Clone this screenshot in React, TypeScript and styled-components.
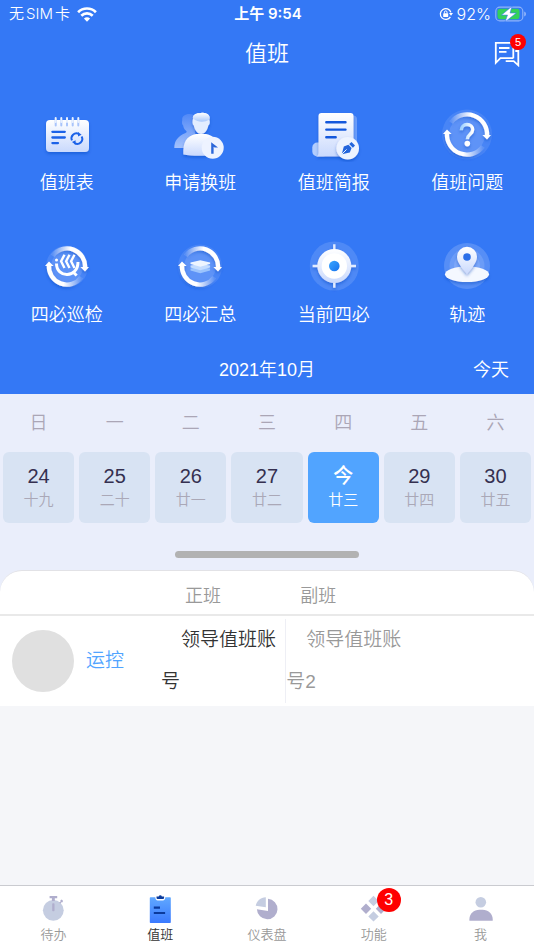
import React from "react";
import styled, { createGlobalStyle } from "styled-components";

const GlobalStyle = createGlobalStyle`
  *, *::before, *::after { box-sizing: border-box; }
  body {
    margin: 0;
    background: #f5f6f9;
    font-family: "Liberation Sans", "Noto Sans CJK SC", sans-serif;
    font-weight: 350;
  }
  button {
    border: 0;
    padding: 0;
    background: none;
    color: inherit;
    font: inherit;
    cursor: pointer;
  }
  h1, h2 { margin: 0; font-weight: inherit; }
  svg { display: block; flex: none; }
`;

const Screen = styled.div`
  display: flex;
  flex-direction: column;
  min-height: 100vh;
`;

const Hero = styled.header`
  background: #3478f5;
  color: #fff;
`;

const StatusBar = styled.div`
  display: grid;
  grid-template-columns: 1fr auto 1fr;
  align-items: center;
  height: 28px;
  padding: 0 7px 0 9px;
  font-family: Inter, "Noto Sans CJK SC", sans-serif;
  font-size: 15px;
  line-height: 20px;
`;

const StatusGroup = styled.div<{ $end?: boolean }>`
  display: flex;
  align-items: center;
  justify-content: ${(p) => (p.$end ? "flex-end" : "flex-start")};
  gap: ${(p) => (p.$end ? 4 : 7)}px;
`;

const Carrier = styled.span`
  display: flex;
  gap: 2px;
`;

const Percent = styled.span`
  font-size: 16px;
`;

const Clock = styled.time`
  font-weight: 600;
`;

const TitleBar = styled.div`
  display: grid;
  grid-template-columns: 1fr auto 1fr;
  align-items: center;
  height: 52px;
  padding: 0 14px;
`;

const Title = styled.h1`
  grid-column: 2;
  font-size: 22px;
  line-height: 32px;
`;

const MessageButton = styled.button`
  position: relative;
  justify-self: end;
`;

const Badge = styled.span<{ $size: number; $top: number; $right: number }>`
  position: absolute;
  top: ${(p) => p.$top}px;
  right: ${(p) => p.$right}px;
  width: ${(p) => p.$size}px;
  height: ${(p) => p.$size}px;
  border-radius: 50%;
  background: #fe0000;
  color: #fff;
  font-size: ${(p) => (p.$size > 20 ? 16 : 11)}px;
  line-height: ${(p) => p.$size}px;
  text-align: center;
`;

const ActionGrid = styled.nav`
  display: grid;
  grid-template-columns: repeat(4, 1fr);
  row-gap: 42px;
  padding: 26px 0 18px;
`;

const Action = styled.button`
  display: flex;
  flex-direction: column;
  align-items: center;
  gap: 8px;
  font-size: 18px;
  line-height: 26px;
`;

const MonthBar = styled.div`
  display: grid;
  grid-template-columns: 1fr auto 1fr;
  align-items: center;
  height: 48px;
  padding: 0 25px;
  font-size: 18px;
  line-height: 26px;
`;

const Month = styled.h2`
  grid-column: 2;
  font-size: 18px;
`;

const TodayButton = styled.button`
  justify-self: end;
`;

const Calendar = styled.section`
  background: #eaeefb;
`;

const Week = styled.div`
  display: grid;
  grid-template-columns: repeat(7, 1fr);
  gap: 5px;
  padding: 0 3px;
`;

const Weekday = styled.span`
  color: #aba6b6;
  font-size: 18px;
  line-height: 58px;
  text-align: center;
`;

const Day = styled.button<{ $today?: boolean }>`
  display: flex;
  flex-direction: column;
  align-items: center;
  justify-content: center;
  height: 71px;
  border-radius: 6px;
  background: ${(p) => (p.$today ? "#51a4ff" : "#d8e3f3")};
  color: ${(p) => (p.$today ? "#fff" : "#353050")};
`;

const DayNumber = styled.span<{ $today?: boolean }>`
  font-size: 20px;
  font-weight: ${(p) => (p.$today ? 500 : 350)};
  line-height: 24px;
`;

const Lunar = styled.span<{ $today?: boolean }>`
  color: ${(p) => (p.$today ? "#fff" : "#aaa8b7")};
  font-size: 15px;
  line-height: 24px;
`;

const HandleArea = styled.div`
  display: flex;
  justify-content: center;
  padding: 28px 0 12px;
`;

const Handle = styled.span`
  width: 184px;
  height: 7px;
  border-radius: 4px;
  background: #b2b2b2;
`;

const RosterBacking = styled.section`
  background: #eaeefb;
`;

const RosterCard = styled.div`
  overflow: hidden;
  border-top: 1px solid #e2e2e6;
  border-radius: 22px 22px 0 0;
  background: #fff;
`;

const Roster = styled.table`
  width: 100%;
  table-layout: fixed;
  border-collapse: collapse;
`;

const TeamCol = styled.col`
  width: 161px;
`;

const HeadCell = styled.th<{ $indent?: number }>`
  height: 44px;
  padding: 6px 0 0 ${(p) => p.$indent ?? 0}px;
  border-bottom: 2px solid #e9e9e9;
  color: #999;
  font-size: 18px;
  font-weight: inherit;
  line-height: 26px;
  text-align: left;
`;

const TeamCell = styled.th`
  padding: 0 0 0 12px;
  font-weight: inherit;
`;

const Team = styled.div`
  display: flex;
  align-items: center;
  gap: 12px;
  color: #51a4ff;
  font-size: 19px;
  line-height: 26px;
`;

const Avatar = styled.span`
  width: 62px;
  height: 62px;
  border-radius: 50%;
  background: #e0e0e0;
`;

const PersonCell = styled.td`
  padding: 3px 0;
`;

const Person = styled.div<{ $deputy?: boolean }>`
  border-left: ${(p) => (p.$deputy ? "1px solid #eeeff5" : "0")};
  color: ${(p) => (p.$deputy ? "#999" : "#333")};
  font-size: 19px;
  line-height: 42px;
  text-indent: 20px;
`;

const Spacer = styled.main`
  flex: 1;
`;

const TabBar = styled.nav`
  display: grid;
  grid-template-columns: repeat(5, 1fr);
  height: 65px;
  border-top: 1px solid #cacbd0;
  background: #fff;
`;

const Tab = styled.button<{ $active?: boolean }>`
  display: flex;
  flex-direction: column;
  align-items: center;
  gap: 2px;
  padding-top: 9px;
  color: ${(p) => (p.$active ? "#333" : "#999")};
  font-size: 13px;
  line-height: 20px;
`;

const TabIcon = styled.span`
  position: relative;
`;

const WifiIcon = () => (
  <svg width="20" height="15" viewBox="0 0 20 15" fill="none" stroke="#fff" strokeWidth="2.7">
    <path d="M1.1 5.2a12.600 12.600 0 0 1 17.800 0M4.300 8.700a8.100 8.100 0 0 1 11.400 0" />
    <path d="M10 14.800 6.900 11.600a4.500 4.500 0 0 1 6.200 0Z" fill="#fff" stroke="none" />
  </svg>
);

const LockIcon = () => (
  <svg width="14" height="14" viewBox="0 0 14 14" fill="none" stroke="#fff" strokeWidth="1.300">
    <path d="M11.400 9.800A5.400 5.400 0 1 1 11.900 5.400" />
    <path d="M10 6h4l-2 2.700Z" fill="#fff" stroke="none" />
    <rect x="4.200" y="6.200" width="5" height="3.800" rx=".6" fill="#fff" stroke="none" />
    <path d="M5.400 6.500V5.200a1.300 1.300 0 0 1 2.600 0v1.300" strokeWidth="1" />
  </svg>
);

const BatteryIcon = () => (
  <svg width="32" height="16" viewBox="0 0 32 16">
    <rect x=".8" y="1.100" width="27" height="13.800" rx="4" fill="none" stroke="#90b4fa" strokeWidth="1.100" />
    <path d="M29.200 5.500c2.400.8 2.400 4.200 0 5Z" fill="#90b4fa" />
    <rect x="2.500" y="2.800" width="22" height="10.400" rx="2.400" fill="#33d158" />
    <path d="M17 .2 6.500 9.100h6L10 15.900 21.300 7h-6.200Z" fill="#fff" stroke="#3478f5" strokeWidth=".6" />
  </svg>
);

const MessageIcon = () => (
  <svg width="26" height="26" viewBox="0 0 26 26" fill="none" stroke="#fff" strokeWidth="1.8">
    <path d="M19.3 17.2V1.8H1.800v20l4.600-4.600h12.900" />
    <path d="M5 7h10.500M5 10.800h7.500M21.300 10h3v14.300l-4.600-4.100h-8" />
  </svg>
);

const Gradients = () => (
  <svg width="0" height="0" aria-hidden="true">
    <defs>
      <linearGradient id="paper" x1="0" y1="0" x2="0" y2="1">
        <stop offset="0" stopColor="#fff" />
        <stop offset="1" stopColor="#c9d9fd" />
      </linearGradient>
      <linearGradient id="ghost" x1="0" y1="0" x2="0" y2="1">
        <stop offset="0" stopColor="#5189f7" />
        <stop offset="1" stopColor="#a3c1fc" />
      </linearGradient>
      <linearGradient id="hair" x1="0" y1="0" x2="0" y2="1">
        <stop offset="0" stopColor="#fff" />
        <stop offset="1" stopColor="#a9c8fb" />
      </linearGradient>
      <linearGradient id="arcRight" x1="0" y1="0" x2="1" y2="0">
        <stop offset="0" stopColor="#fff" stopOpacity=".1" />
        <stop offset=".55" stopColor="#fff" />
      </linearGradient>
      <linearGradient id="arcLeft" x1="0" y1="0" x2="1" y2="0">
        <stop offset=".45" stopColor="#fff" />
        <stop offset="1" stopColor="#fff" stopOpacity=".1" />
      </linearGradient>
      <linearGradient id="question" x1="0" y1="0" x2="1" y2="0">
        <stop offset="0" stopColor="#9fd2ff" />
        <stop offset="1" stopColor="#fff" />
      </linearGradient>
      <linearGradient id="dot" x1="0" y1="0" x2="1" y2="1">
        <stop offset="0" stopColor="#3ba6ff" />
        <stop offset="1" stopColor="#1672ee" />
      </linearGradient>
      <linearGradient id="board" x1="0" y1="0" x2="0" y2="1">
        <stop offset="0" stopColor="#60a8ff" />
        <stop offset="1" stopColor="#3b7aff" />
      </linearGradient>
      <filter id="shade" x="-30%" y="-30%" width="160%" height="170%">
        <feDropShadow dx="0" dy="2" stdDeviation="1.6" floodColor="#0b45bd" floodOpacity=".45" />
      </filter>
    </defs>
  </svg>
);

const ActionSvg = ({ children }: { children: React.ReactNode }) => (
  <svg width="56" height="56" viewBox="0 0 56 56" fill="none" aria-hidden="true">
    {children}
  </svg>
);

const Cycle = ({ r, halo }: { r: number; halo: number }) => (
  <>
    <circle cx="28" cy="28.5" r={halo} fill="#fff" fillOpacity=".1" />
    <circle cx="28" cy="28.5" r={r - 2} fill="#fff" fillOpacity=".12" />
    <g filter="url(#shade)">
      <path
        d={`M${28 - r * 0.8} ${28.5 - r * 0.6}A${r} ${r} 0 0 1 ${28 + r} 30`}
        stroke="url(#arcRight)"
        strokeWidth="4.4"
      />
      <path
        d={`M${28 + r * 0.8} ${28.5 + r * 0.6}A${r} ${r} 0 0 1 ${28 - r} 27`}
        stroke="url(#arcLeft)"
        strokeWidth="4.4"
      />
      <path d={`M${28 + r - 4.6} 29h8.600l-4 4.500ZM${28 - r - 4} 28h8.600l-4.600-4.500Z`} fill="#fff" />
    </g>
  </>
);

const ScheduleIcon = () => (
  <ActionSvg>
    <rect x="7" y="14" width="43" height="32" rx="4" fill="url(#paper)" filter="url(#shade)" />
    {[16.7, 22.3, 28, 33.7, 39.3].map((x) => (
      <g key={x} strokeLinecap="round" strokeWidth="2">
        <path d={`M${x} 14.5v5`} stroke="#a9c4fb" />
        <path d={`M${x} 12v4`} stroke="#e9f1ff" />
      </g>
    ))}
    <path d="M13.4 25.8h12.4M13.4 31.5h12.4M13.4 37.1h5.6" stroke="#1c62e8" strokeWidth="2.300" strokeLinecap="round" />
    <path d="M33 34.400a5 5 0 0 1 6.800-6.600M42.600 30.400a5 5 0 0 1-7 6.700" stroke="#1c62e8" strokeWidth="2" />
    <path d="m39 26 3.600 2.800-3.600 1.800ZM36.600 38.800 33 36l3.600-1.800Z" fill="#1c62e8" />
  </ActionSvg>
);

const SwapIcon = () => (
  <ActionSvg>
    <path d="M10.300 14c-.6-3.500 2.700-6 7-6 3 0 5 1 6 2.500V42H2.300C2.300 35 5.500 30.500 13.500 27c1.500-.7 1.500-1.500.3-2.500-1.600-1.300-2.300-3-2.600-5-1.300-1-1.500-3-.9-5.500Z" fill="url(#ghost)" />
    <g filter="url(#shade)">
      <path d="M11.300 48.500C11 36 14 30.500 24 28h10c6 1 9 4 10 9v11c-8 2.300-24 2.300-32.700.5Z" fill="url(#paper)" />
      <path d="M21 12.500c-.6-3 2.500-5.200 6-5.200 2 0 3-.8 5-.3 4.500.5 6.300 3 5.400 6.500.8 3 .5 5-1 6-1 5-4 8.500-7.300 8.500s-6.300-3.500-7.300-8.500c-1.500-1-1.700-4-.8-7Z" fill="#e3edff" />
      <path d="M21 12.500c-.6-3 2.500-5.200 6-5.200 2 0 3-.8 5-.3 4.500.5 6.300 3 5.400 6.500-5 3-11 3.200-16.400-1Z" fill="url(#hair)" />
    </g>
    <circle cx="40.700" cy="41.700" r="11" fill="#eef3ff" />
    <path d="M39.200 36.200 46 41.600h-3.400l-1-.8v7h-2.400Z" fill="#2c67d9" />
  </ActionSvg>
);

const BriefIcon = () => (
  <ActionSvg>
    <rect x="28" y="9.500" width="23" height="30" rx="4" fill="#6c9df9" />
    <rect x="6.300" y="36.500" width="16" height="14" rx="5" fill="#b3cdfd" />
    <path d="M15.500 7h29a3 3 0 0 1 3 3v40.500H9.500c2 0 3-1.500 3-4V10a3 3 0 0 1 3-3Z" fill="url(#paper)" filter="url(#shade)" />
    <path d="M20.300 16.200h19.200M20.300 23.600h19.200M20.300 31.300h9.400" stroke="#1458dc" strokeWidth="2.400" strokeLinecap="round" />
    <circle cx="41.700" cy="42.300" r="11.300" fill="#edf3ff" filter="url(#shade)" />
    <path d="m35.800 48.200 2-7.800 4.600-1.600 3.200 3.200-1.800 4.600Z" fill="#2465dc" />
    <path d="m35.800 48.200 4.800-4.800" stroke="#edf3ff" strokeWidth="1" />
    <path d="m43.200 37.900 2.300-2 3.500 3.700-2.100 2.100Z" fill="#2465dc" />
  </ActionSvg>
);

const QuestionIcon = () => (
  <ActionSvg>
    <Cycle r={20} halo={25} />
    <g filter="url(#shade)">
      <path d="M22.300 24.300c0-3.500 2.400-5.800 5.700-5.800s5.700 2.100 5.700 5.100c0 4.900-5.400 4.500-5.400 9.700" stroke="url(#question)" strokeWidth="3.400" />
      <circle cx="28.300" cy="37.600" r="2.800" fill="#fff" />
    </g>
  </ActionSvg>
);

const PatrolIcon = () => (
  <ActionSvg>
    <Cycle r={18} halo={21} />
    <g stroke="#fff" strokeWidth="2.400">
      <path d="m25.500 16.800-3.400 6.400 3.400 6.800M30.500 16.800l-3.400 6.400 3.400 6.800M35.500 16.800l-3.400 6.400 3.400 6.800" />
      <path d="M17.500 25.500c0 15 21.500 15 21.500-1.500M34.500 34.500l3.200 3" strokeWidth="3" />
    </g>
    <circle cx="17.500" cy="22" r="1.500" fill="#fff" />
  </ActionSvg>
);

const SummaryIcon = () => (
  <ActionSvg>
    <Cycle r={18} halo={22} />
    <path d="m18.500 30.500 9.800-1.500 9.800 1.500v2l-9.800 2.700-9.800-2.700Z" fill="#9cc4fd" />
    <path d="m18.500 27.500 9.800-1.500 9.800 1.500v2l-9.800 2.700-9.800-2.700Z" fill="#c3dcff" />
    <path d="m18.500 24.500 9.800-2.300 9.800 2.300v1.500l-9.800 2.700-9.800-2.700Z" fill="#eef5ff" />
  </ActionSvg>
);

const TargetIcon = () => (
  <ActionSvg>
    <circle cx="28.300" cy="28" r="24.500" fill="#fff" fillOpacity=".13" />
    <g filter="url(#shade)">
      <path d="M28.300 6.300v43.400M6.600 28H50" stroke="#e2ecff" strokeWidth="2.400" />
      <circle cx="28.300" cy="28" r="17" fill="url(#paper)" />
    </g>
    <circle cx="28.300" cy="28" r="12.700" fill="#fff" />
    <circle cx="28.300" cy="28" r="5.300" fill="url(#dot)" />
  </ActionSvg>
);

const TrackIcon = () => (
  <ActionSvg>
    <circle cx="28" cy="28" r="23" fill="#fff" fillOpacity=".17" />
    <circle cx="28" cy="28" r="17.500" fill="#fff" fillOpacity=".13" />
    <circle cx="28" cy="28" r="13" fill="#fff" fillOpacity=".12" />
    <ellipse cx="28" cy="36.200" rx="22" ry="7.800" fill="#f4f8ff" filter="url(#shade)" />
    <path
      d="M28 36.300c-3-4-10-11-10-17.500a10 10 0 0 1 20 0c0 6.500-7 13.500-10 17.500Z"
      fill="url(#paper)"
      filter="url(#shade)"
    />
    <circle cx="28" cy="19" r="3.800" fill="#2b6fe8" />
  </ActionSvg>
);

const TabSvg = ({ children }: { children: React.ReactNode }) => (
  <svg width="28" height="28" viewBox="0 0 28 28" aria-hidden="true">
    {children}
  </svg>
);

const light = "#c5cde1";
const dark = "#b0aecd";

const TimerIcon = () => (
  <TabSvg>
    <circle cx="14.300" cy="15.300" r="10.400" fill={light} />
    <path d="M10.600 1h7.600v2.300h-2.400V6h-2.900V3.300h-2.300Z" fill={dark} />
    <path d="m20.200 7.600 1.600-1.400-.6-.8 1.600-.8 1.300 1.400-.9 1.600-.8-.4-1.300 1.500Z" fill={dark} />
    <rect x="13.200" y="8.300" width="2.300" height="8" rx=".8" fill={dark} />
  </TabSvg>
);

const DutyIcon = () => (
  <TabSvg>
    <path d="M4.500 2.200h4.800c0 2 1 3.200 2.400 3.200h5.200c1.400 0 2.400-1.200 2.400-3.200h4.800q.7 0 .7.700v24.400q0 .7-.7.700H4.500q-.7 0-.7-.7V2.900q0-.7.700-.7Z" fill="url(#board)" />
    <path d="M10.500 1.500h2.200a1.700 1.700 0 0 1 3.200 0h2.200v1c0 1-.6 1.600-1.500 1.600H12c-.9 0-1.500-.6-1.500-1.600Z" fill="#0b3a9c" />
    <path d="M7.800 12.700H14M7.800 18h11.300" stroke="#0b3a9c" strokeWidth="2.200" />
  </TabSvg>
);

const DashboardIcon = () => (
  <TabSvg>
    <path d="M12.800 12.300 2.700 10.700C3.700 6 7.500 2.600 12.800 2.300Z" fill={light} />
    <path d="M15 3.700a10.300 10.300 0 1 1-11.100 10.600L15 16Z" fill={dark} />
  </TabSvg>
);

const FeaturesIcon = () => (
  <TabSvg>
    <path d="m13.500.8 5.200 5.200-5.200 5.200L8.300 6ZM13.500 16.200l5.200 5.200-5.200 5.200-5.200-5.200Z" fill={light} />
    <path d="m6 8.500 5.200 5.200L6 18.900.8 13.700ZM21 8.500l5.200 5.200-5.200 5.200-5.200-5.200Z" fill={dark} />
  </TabSvg>
);

const ProfileIcon = () => (
  <TabSvg>
    <circle cx="13.800" cy="7.300" r="5.300" fill={light} />
    <path d="M2.400 25.700v-1.500c0-5.500 4.500-9.500 10-9.500h3.200c5.500 0 10.100 4 10.100 9.500v1.500Z" fill={dark} />
  </TabSvg>
);

const actions = [
  { label: "值班表", Icon: ScheduleIcon },
  { label: "申请换班", Icon: SwapIcon },
  { label: "值班简报", Icon: BriefIcon },
  { label: "值班问题", Icon: QuestionIcon },
  { label: "四必巡检", Icon: PatrolIcon },
  { label: "四必汇总", Icon: SummaryIcon },
  { label: "当前四必", Icon: TargetIcon },
  { label: "轨迹", Icon: TrackIcon },
];

const weekdays = ["日", "一", "二", "三", "四", "五", "六"];

const days = [
  { day: "24", lunar: "十九" },
  { day: "25", lunar: "二十" },
  { day: "26", lunar: "廿一" },
  { day: "27", lunar: "廿二" },
  { day: "今", lunar: "廿三", today: true },
  { day: "29", lunar: "廿四" },
  { day: "30", lunar: "廿五" },
];

const tabs = [
  { label: "待办", Icon: TimerIcon },
  { label: "值班", Icon: DutyIcon, active: true },
  { label: "仪表盘", Icon: DashboardIcon },
  { label: "功能", Icon: FeaturesIcon, badge: 3 },
  { label: "我", Icon: ProfileIcon },
];

export default function App() {
  return (
    <Screen>
      <GlobalStyle />
      <Hero>
        <StatusBar>
          <StatusGroup>
            <Carrier>
              <span>无</span>
              <span>SIM</span>
              <span>卡</span>
            </Carrier>
            <WifiIcon />
          </StatusGroup>
          <Clock>上午 9:54</Clock>
          <StatusGroup $end>
            <LockIcon />
            <Percent>92%</Percent>
            <BatteryIcon />
          </StatusGroup>
        </StatusBar>
        <TitleBar>
          <Title>值班</Title>
          <MessageButton aria-label="消息">
            <MessageIcon />
            <Badge $size={16} $top={-7} $right={-6}>5</Badge>
          </MessageButton>
        </TitleBar>
        <ActionGrid>
          {actions.map(({ label, Icon }) => (
            <Action key={label}>
              <Icon />
              {label}
            </Action>
          ))}
        </ActionGrid>
        <MonthBar>
          <Month>2021年10月</Month>
          <TodayButton>今天</TodayButton>
        </MonthBar>
      </Hero>
      <Calendar>
        <Week>
          {weekdays.map((name) => (
            <Weekday key={name}>{name}</Weekday>
          ))}
        </Week>
        <Week>
          {days.map(({ day, lunar, today }) => (
            <Day key={day} $today={today}>
              <DayNumber $today={today}>{day}</DayNumber>
              <Lunar $today={today}>{lunar}</Lunar>
            </Day>
          ))}
        </Week>
        <HandleArea>
          <Handle />
        </HandleArea>
      </Calendar>
      <RosterBacking>
        <RosterCard>
          <Roster>
            <colgroup>
              <TeamCol />
              <col />
              <col />
              <col />
            </colgroup>
            <thead>
              <tr>
                <HeadCell aria-label="班组" />
                <HeadCell $indent={24}>正班</HeadCell>
                <HeadCell $indent={15} colSpan={2}>副班</HeadCell>
              </tr>
            </thead>
            <tbody>
              <tr>
                <TeamCell scope="row">
                  <Team>
                    <Avatar />
                    运控
                  </Team>
                </TeamCell>
                <PersonCell>
                  <Person>领导值班账号</Person>
                </PersonCell>
                <PersonCell>
                  <Person $deputy>领导值班账号2</Person>
                </PersonCell>
                <td />
              </tr>
            </tbody>
          </Roster>
        </RosterCard>
      </RosterBacking>
      <Spacer />
      <TabBar>
        {tabs.map(({ label, Icon, active, badge }) => (
          <Tab key={label} $active={active} aria-current={active ? "page" : undefined}>
            <TabIcon>
              <Icon />
              {badge && <Badge $size={24} $top={-7} $right={-13}>{badge}</Badge>}
            </TabIcon>
            {label}
          </Tab>
        ))}
      </TabBar>
      <Gradients />
    </Screen>
  );
}
